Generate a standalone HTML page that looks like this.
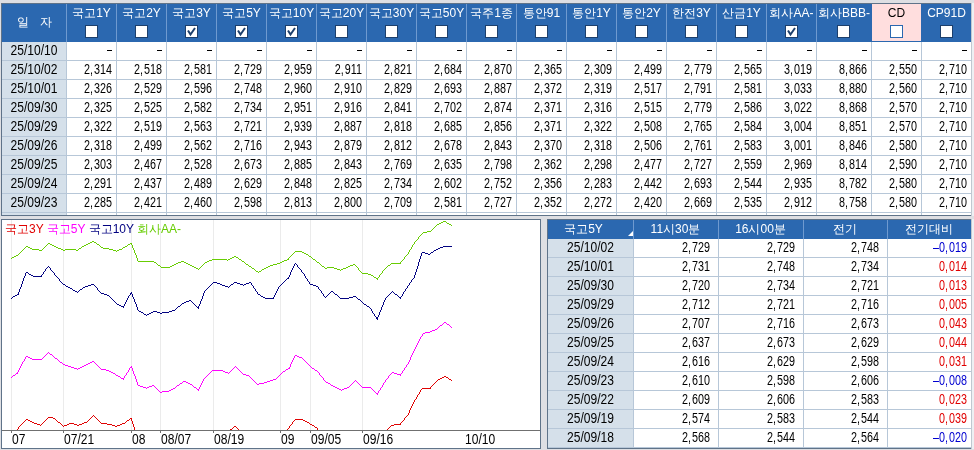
<!DOCTYPE html><html><head><meta charset="utf-8"><style>
*{margin:0;padding:0;box-sizing:border-box}
html,body{width:974px;height:450px;overflow:hidden;background:#dedfe3;font-family:"Liberation Sans",sans-serif;font-size:12px;color:#000}
.a{position:absolute}
.t{position:absolute;white-space:nowrap;line-height:12px}
.num{font-size:14px;line-height:13px;text-align:right;transform:scaleX(0.77);transform-origin:100% 0}
.dt{font-size:14px;line-height:13px;text-align:center;transform:scaleX(0.86);transform-origin:50% 0}
.r{text-align:right}
.c{text-align:center}
.hd{color:#fff}
.cm{margin-right:1.3px}
.lb{font-size:14px;line-height:13px;transform:scaleX(0.86);transform-origin:0 0}
.cb{position:absolute;width:13px;height:13px;background:#fff;border:1px solid #1d3f6b}
</style></head><body>
<div class="a" style="left:1px;top:3px;width:971px;height:213px;background:#fff;border:1px solid #5f7389;border-right:none"></div>
<div class="a" style="left:2px;top:4px;width:969px;height:38px;background:#2b68b0"></div>
<div class="a" style="left:872px;top:4px;width:49px;height:37px;background:#ffdede"></div>
<div class="a" style="left:2px;top:42px;width:64px;height:173px;background:#d5e0ea"></div>
<div class="a" style="left:66px;top:4px;width:1px;height:38px;background:#6f9ad0"></div>
<div class="a" style="left:116px;top:4px;width:1px;height:38px;background:#6f9ad0"></div>
<div class="a" style="left:166px;top:4px;width:1px;height:38px;background:#6f9ad0"></div>
<div class="a" style="left:216px;top:4px;width:1px;height:38px;background:#6f9ad0"></div>
<div class="a" style="left:266px;top:4px;width:1px;height:38px;background:#6f9ad0"></div>
<div class="a" style="left:316px;top:4px;width:1px;height:38px;background:#6f9ad0"></div>
<div class="a" style="left:366px;top:4px;width:1px;height:38px;background:#6f9ad0"></div>
<div class="a" style="left:416px;top:4px;width:1px;height:38px;background:#6f9ad0"></div>
<div class="a" style="left:466px;top:4px;width:1px;height:38px;background:#6f9ad0"></div>
<div class="a" style="left:516px;top:4px;width:1px;height:38px;background:#6f9ad0"></div>
<div class="a" style="left:566px;top:4px;width:1px;height:38px;background:#6f9ad0"></div>
<div class="a" style="left:616px;top:4px;width:1px;height:38px;background:#6f9ad0"></div>
<div class="a" style="left:666px;top:4px;width:1px;height:38px;background:#6f9ad0"></div>
<div class="a" style="left:716px;top:4px;width:1px;height:38px;background:#6f9ad0"></div>
<div class="a" style="left:766px;top:4px;width:1px;height:38px;background:#6f9ad0"></div>
<div class="a" style="left:816px;top:4px;width:1px;height:38px;background:#6f9ad0"></div>
<div class="a" style="left:66px;top:42px;width:1px;height:173px;background:#b7c7d8"></div>
<div class="a" style="left:116px;top:42px;width:1px;height:173px;background:#b7c7d8"></div>
<div class="a" style="left:166px;top:42px;width:1px;height:173px;background:#b7c7d8"></div>
<div class="a" style="left:216px;top:42px;width:1px;height:173px;background:#b7c7d8"></div>
<div class="a" style="left:266px;top:42px;width:1px;height:173px;background:#b7c7d8"></div>
<div class="a" style="left:316px;top:42px;width:1px;height:173px;background:#b7c7d8"></div>
<div class="a" style="left:366px;top:42px;width:1px;height:173px;background:#b7c7d8"></div>
<div class="a" style="left:416px;top:42px;width:1px;height:173px;background:#b7c7d8"></div>
<div class="a" style="left:466px;top:42px;width:1px;height:173px;background:#b7c7d8"></div>
<div class="a" style="left:516px;top:42px;width:1px;height:173px;background:#b7c7d8"></div>
<div class="a" style="left:566px;top:42px;width:1px;height:173px;background:#b7c7d8"></div>
<div class="a" style="left:616px;top:42px;width:1px;height:173px;background:#b7c7d8"></div>
<div class="a" style="left:666px;top:42px;width:1px;height:173px;background:#b7c7d8"></div>
<div class="a" style="left:716px;top:42px;width:1px;height:173px;background:#b7c7d8"></div>
<div class="a" style="left:766px;top:42px;width:1px;height:173px;background:#b7c7d8"></div>
<div class="a" style="left:816px;top:42px;width:1px;height:173px;background:#b7c7d8"></div>
<div class="a" style="left:871px;top:42px;width:1px;height:173px;background:#b7c7d8"></div>
<div class="a" style="left:921px;top:42px;width:1px;height:173px;background:#b7c7d8"></div>
<div class="a" style="left:971px;top:42px;width:1px;height:173px;background:#b7c7d8"></div>
<div class="a" style="left:2px;top:60px;width:969px;height:1px;background:#b7c7d8"></div>
<div class="a" style="left:2px;top:79px;width:969px;height:1px;background:#b7c7d8"></div>
<div class="a" style="left:2px;top:98px;width:969px;height:1px;background:#b7c7d8"></div>
<div class="a" style="left:2px;top:117px;width:969px;height:1px;background:#b7c7d8"></div>
<div class="a" style="left:2px;top:136px;width:969px;height:1px;background:#b7c7d8"></div>
<div class="a" style="left:2px;top:155px;width:969px;height:1px;background:#b7c7d8"></div>
<div class="a" style="left:2px;top:174px;width:969px;height:1px;background:#b7c7d8"></div>
<div class="a" style="left:2px;top:193px;width:969px;height:1px;background:#b7c7d8"></div>
<div class="a" style="left:2px;top:212px;width:969px;height:1px;background:#b7c7d8"></div>
<div class="cb" style="left:85px;top:25px;border-color:#1d3f6b"></div>
<div class="cb" style="left:135px;top:25px;border-color:#1d3f6b"></div>
<div class="cb" style="left:185px;top:25px;border-color:#1d3f6b"></div>
<svg class="a" style="left:185px;top:25px" width="13" height="13"><path d="M3 5.5 L5.5 9.5 L10 3" stroke="#1d3f6b" stroke-width="2" fill="none"/></svg>
<div class="cb" style="left:235px;top:25px;border-color:#1d3f6b"></div>
<svg class="a" style="left:235px;top:25px" width="13" height="13"><path d="M3 5.5 L5.5 9.5 L10 3" stroke="#1d3f6b" stroke-width="2" fill="none"/></svg>
<div class="cb" style="left:285px;top:25px;border-color:#1d3f6b"></div>
<svg class="a" style="left:285px;top:25px" width="13" height="13"><path d="M3 5.5 L5.5 9.5 L10 3" stroke="#1d3f6b" stroke-width="2" fill="none"/></svg>
<div class="cb" style="left:335px;top:25px;border-color:#1d3f6b"></div>
<div class="cb" style="left:385px;top:25px;border-color:#1d3f6b"></div>
<div class="cb" style="left:435px;top:25px;border-color:#1d3f6b"></div>
<div class="cb" style="left:485px;top:25px;border-color:#1d3f6b"></div>
<div class="cb" style="left:535px;top:25px;border-color:#1d3f6b"></div>
<div class="cb" style="left:585px;top:25px;border-color:#1d3f6b"></div>
<div class="cb" style="left:635px;top:25px;border-color:#1d3f6b"></div>
<div class="cb" style="left:685px;top:25px;border-color:#1d3f6b"></div>
<div class="cb" style="left:735px;top:25px;border-color:#1d3f6b"></div>
<div class="cb" style="left:785px;top:25px;border-color:#1d3f6b"></div>
<svg class="a" style="left:785px;top:25px" width="13" height="13"><path d="M3 5.5 L5.5 9.5 L10 3" stroke="#1d3f6b" stroke-width="2" fill="none"/></svg>
<div class="cb" style="left:837px;top:25px;border-color:#1d3f6b"></div>
<div class="cb" style="left:890px;top:25px;border-color:#2b68b0"></div>
<div class="cb" style="left:940px;top:25px;border-color:#1d3f6b"></div>
<div class="a" style="left:107px;top:50px;width:5px;height:1px;background:#000"></div>
<div class="a" style="left:157px;top:50px;width:5px;height:1px;background:#000"></div>
<div class="a" style="left:207px;top:50px;width:5px;height:1px;background:#000"></div>
<div class="a" style="left:257px;top:50px;width:5px;height:1px;background:#000"></div>
<div class="a" style="left:307px;top:50px;width:5px;height:1px;background:#000"></div>
<div class="a" style="left:357px;top:50px;width:5px;height:1px;background:#000"></div>
<div class="a" style="left:407px;top:50px;width:5px;height:1px;background:#000"></div>
<div class="a" style="left:457px;top:50px;width:5px;height:1px;background:#000"></div>
<div class="a" style="left:507px;top:50px;width:5px;height:1px;background:#000"></div>
<div class="a" style="left:557px;top:50px;width:5px;height:1px;background:#000"></div>
<div class="a" style="left:607px;top:50px;width:5px;height:1px;background:#000"></div>
<div class="a" style="left:657px;top:50px;width:5px;height:1px;background:#000"></div>
<div class="a" style="left:707px;top:50px;width:5px;height:1px;background:#000"></div>
<div class="a" style="left:757px;top:50px;width:5px;height:1px;background:#000"></div>
<div class="a" style="left:807px;top:50px;width:5px;height:1px;background:#000"></div>
<div class="a" style="left:862px;top:50px;width:5px;height:1px;background:#000"></div>
<div class="a" style="left:912px;top:50px;width:5px;height:1px;background:#000"></div>
<div class="a" style="left:962px;top:50px;width:5px;height:1px;background:#000"></div>
<div class="a" style="left:971px;top:3px;width:3px;height:213px;background:#eef0f3;border-left:1px solid #c0c8d0"></div>
<div class="a" style="left:1px;top:219px;width:540px;height:230px;background:#fff;border:1px solid #5f7389"></div>
<svg class="a" style="left:0;top:0" width="974" height="450"><defs><clipPath id="cp"><rect x="2" y="220" width="538" height="210"/></clipPath></defs><line x1="11.5" y1="220" x2="11.5" y2="430" stroke="#ebebeb" stroke-width="1"/><line x1="63.5" y1="220" x2="63.5" y2="430" stroke="#ebebeb" stroke-width="1"/><line x1="131.5" y1="220" x2="131.5" y2="430" stroke="#ebebeb" stroke-width="1"/><line x1="160.5" y1="220" x2="160.5" y2="430" stroke="#ebebeb" stroke-width="1"/><line x1="213.5" y1="220" x2="213.5" y2="430" stroke="#ebebeb" stroke-width="1"/><line x1="280.5" y1="220" x2="280.5" y2="430" stroke="#ebebeb" stroke-width="1"/><line x1="310.5" y1="220" x2="310.5" y2="430" stroke="#ebebeb" stroke-width="1"/><line x1="362.5" y1="220" x2="362.5" y2="430" stroke="#ebebeb" stroke-width="1"/><g clip-path="url(#cp)" fill="none" stroke-width="0.99" shape-rendering="crispEdges"><polyline points="11.25,258.25 17.25,255.25 26.25,246.25 32.25,249.25 41.25,250.25 48.25,243.25 63.25,250.25 71.25,249.25 77.25,250.25 85.25,245.25 93.25,241.25 103.25,248.25 110.25,249.25 116.25,251.25 121.25,249.25 131.25,243.25 138.25,261.25 153.25,261.25 161.25,267.25 169.25,267.25 182.25,261.25 198.25,269.25 206.25,262.25 213.25,259.25 224.25,259.25 227.25,260.25 235.25,256.25 248.25,265.25 258.25,272.25 269.25,266.25 279.25,263.25 288.25,259.25 295.25,251.25 299.25,251.25 303.25,252.25 311.25,257.25 325.25,268.25 332.25,267.25 340.25,270.25 347.25,267.25 354.25,264.25 362.25,273.25 370.25,274.25 377.25,279.25 385.25,268.25 392.25,263.25 400.25,263.25 408.25,253.25 414.25,243.25 422.25,233.25 430.25,231.25 438.25,224.25 444.25,221.25 451.25,225.25" stroke="#66cc00"/><path d="M11 258h1v1h-1zM17 255h1v1h-1zM26 246h1v1h-1zM32 249h1v1h-1zM41 250h1v1h-1zM48 243h1v1h-1zM63 250h1v1h-1zM71 249h1v1h-1zM77 250h1v1h-1zM85 245h1v1h-1zM93 241h1v1h-1zM103 248h1v1h-1zM110 249h1v1h-1zM116 251h1v1h-1zM121 249h1v1h-1zM131 243h1v1h-1zM138 261h1v1h-1zM153 261h1v1h-1zM161 267h1v1h-1zM169 267h1v1h-1zM182 261h1v1h-1zM198 269h1v1h-1zM206 262h1v1h-1zM213 259h1v1h-1zM224 259h1v1h-1zM227 260h1v1h-1zM235 256h1v1h-1zM248 265h1v1h-1zM258 272h1v1h-1zM269 266h1v1h-1zM279 263h1v1h-1zM288 259h1v1h-1zM295 251h1v1h-1zM299 251h1v1h-1zM303 252h1v1h-1zM311 257h1v1h-1zM325 268h1v1h-1zM332 267h1v1h-1zM340 270h1v1h-1zM347 267h1v1h-1zM354 264h1v1h-1zM362 273h1v1h-1zM370 274h1v1h-1zM377 279h1v1h-1zM385 268h1v1h-1zM392 263h1v1h-1zM400 263h1v1h-1zM408 253h1v1h-1zM414 243h1v1h-1zM422 233h1v1h-1zM430 231h1v1h-1zM438 224h1v1h-1zM444 221h1v1h-1zM451 225h1v1h-1z" fill="#66cc00" stroke="none"/><polyline points="11.25,298.25 18.25,294.25 26.25,272.25 33.25,276.25 41.25,276.25 48.25,266.25 56.25,276.25 63.25,284.25 70.25,288.25 77.25,292.25 84.25,287.25 93.25,284.25 101.25,293.25 108.25,295.25 117.25,304.25 123.25,307.25 131.25,292.25 138.25,310.25 146.25,315.25 154.25,311.25 160.25,313.25 168.25,312.25 174.25,310.25 183.25,303.25 190.25,300.25 198.25,308.25 205.25,290.25 214.25,282.25 220.25,284.25 228.25,287.25 235.25,282.25 243.25,285.25 250.25,282.25 258.25,294.25 265.25,298.25 273.25,298.25 279.25,286.25 288.25,278.25 295.25,263.25 303.25,273.25 310.25,284.25 317.25,286.25 325.25,297.25 332.25,291.25 340.25,298.25 348.25,298.25 355.25,296.25 363.25,303.25 370.25,308.25 377.25,319.25 385.25,299.25 392.25,291.25 400.25,298.25 407.25,287.25 414.25,277.25 422.25,252.25 429.25,254.25 435.25,250.25 444.25,246.25 451.25,246.25" stroke="#000080"/><path d="M11 298h1v1h-1zM18 294h1v1h-1zM26 272h1v1h-1zM33 276h1v1h-1zM41 276h1v1h-1zM48 266h1v1h-1zM56 276h1v1h-1zM63 284h1v1h-1zM70 288h1v1h-1zM77 292h1v1h-1zM84 287h1v1h-1zM93 284h1v1h-1zM101 293h1v1h-1zM108 295h1v1h-1zM117 304h1v1h-1zM123 307h1v1h-1zM131 292h1v1h-1zM138 310h1v1h-1zM146 315h1v1h-1zM154 311h1v1h-1zM160 313h1v1h-1zM168 312h1v1h-1zM174 310h1v1h-1zM183 303h1v1h-1zM190 300h1v1h-1zM198 308h1v1h-1zM205 290h1v1h-1zM214 282h1v1h-1zM220 284h1v1h-1zM228 287h1v1h-1zM235 282h1v1h-1zM243 285h1v1h-1zM250 282h1v1h-1zM258 294h1v1h-1zM265 298h1v1h-1zM273 298h1v1h-1zM279 286h1v1h-1zM288 278h1v1h-1zM295 263h1v1h-1zM303 273h1v1h-1zM310 284h1v1h-1zM317 286h1v1h-1zM325 297h1v1h-1zM332 291h1v1h-1zM340 298h1v1h-1zM348 298h1v1h-1zM355 296h1v1h-1zM363 303h1v1h-1zM370 308h1v1h-1zM377 319h1v1h-1zM385 299h1v1h-1zM392 291h1v1h-1zM400 298h1v1h-1zM407 287h1v1h-1zM414 277h1v1h-1zM422 252h1v1h-1zM429 254h1v1h-1zM435 250h1v1h-1zM444 246h1v1h-1zM451 246h1v1h-1z" fill="#000080" stroke="none"/><polyline points="11.25,377.25 17.25,373.25 26.25,356.25 32.25,359.25 41.25,359.25 48.25,352.25 59.25,361.25 63.25,364.25 71.25,367.25 77.25,369.25 85.25,365.25 93.25,361.25 101.25,369.25 107.25,370.25 115.25,374.25 123.25,379.25 131.25,366.25 138.25,385.25 146.25,388.25 153.25,385.25 160.25,392.25 168.25,391.25 174.25,388.25 184.25,381.25 192.25,385.25 198.25,390.25 204.25,378.25 213.25,370.25 221.25,370.25 228.25,373.25 235.25,366.25 243.25,374.25 249.25,376.25 257.25,384.25 263.25,383.25 269.25,381.25 275.25,379.25 284.25,371.25 289.25,368.25 295.25,355.25 302.25,358.25 311.25,367.25 317.25,371.25 325.25,381.25 333.25,386.25 341.25,390.25 348.25,387.25 355.25,380.25 362.25,387.25 370.25,387.25 377.25,394.25 385.25,381.25 392.25,372.25 400.25,375.25 408.25,363.25 415.25,348.25 423.25,333.25 429.25,332.25 436.25,329.25 445.25,322.25 451.25,327.25" stroke="#ff00ff"/><path d="M11 377h1v1h-1zM17 373h1v1h-1zM26 356h1v1h-1zM32 359h1v1h-1zM41 359h1v1h-1zM48 352h1v1h-1zM59 361h1v1h-1zM63 364h1v1h-1zM71 367h1v1h-1zM77 369h1v1h-1zM85 365h1v1h-1zM93 361h1v1h-1zM101 369h1v1h-1zM107 370h1v1h-1zM115 374h1v1h-1zM123 379h1v1h-1zM131 366h1v1h-1zM138 385h1v1h-1zM146 388h1v1h-1zM153 385h1v1h-1zM160 392h1v1h-1zM168 391h1v1h-1zM174 388h1v1h-1zM184 381h1v1h-1zM192 385h1v1h-1zM198 390h1v1h-1zM204 378h1v1h-1zM213 370h1v1h-1zM221 370h1v1h-1zM228 373h1v1h-1zM235 366h1v1h-1zM243 374h1v1h-1zM249 376h1v1h-1zM257 384h1v1h-1zM263 383h1v1h-1zM269 381h1v1h-1zM275 379h1v1h-1zM284 371h1v1h-1zM289 368h1v1h-1zM295 355h1v1h-1zM302 358h1v1h-1zM311 367h1v1h-1zM317 371h1v1h-1zM325 381h1v1h-1zM333 386h1v1h-1zM341 390h1v1h-1zM348 387h1v1h-1zM355 380h1v1h-1zM362 387h1v1h-1zM370 387h1v1h-1zM377 394h1v1h-1zM385 381h1v1h-1zM392 372h1v1h-1zM400 375h1v1h-1zM408 363h1v1h-1zM415 348h1v1h-1zM423 333h1v1h-1zM429 332h1v1h-1zM436 329h1v1h-1zM445 322h1v1h-1zM451 327h1v1h-1z" fill="#ff00ff" stroke="none"/><polyline points="11.25,437.25 18.25,428.25 26.25,419.25 34.25,423.25 40.25,425.25 48.25,417.25 54.25,418.25 63.25,426.25 71.25,423.25 78.25,425.25 86.25,422.25 93.25,415.25 101.25,423.25 109.25,424.25 116.25,426.25 124.25,423.25 131.25,418.25 138.25,439.25 146.25,445.25 220.25,445.25 227.25,432.25 235.25,426.25 242.25,433.25 250.25,445.25 272.25,445.25 279.25,440.25 287.25,430.25 295.25,419.25 301.25,419.25 307.25,422.25 317.25,428.25 324.25,440.25 332.25,445.25 377.25,445.25 384.25,432.25 392.25,425.25 400.25,424.25 408.25,414.25 413.25,403.25 422.25,388.25 430.25,388.25 437.25,380.25 445.25,376.25 451.25,380.25" stroke="#e00000"/><path d="M11 437h1v1h-1zM18 428h1v1h-1zM26 419h1v1h-1zM34 423h1v1h-1zM40 425h1v1h-1zM48 417h1v1h-1zM54 418h1v1h-1zM63 426h1v1h-1zM71 423h1v1h-1zM78 425h1v1h-1zM86 422h1v1h-1zM93 415h1v1h-1zM101 423h1v1h-1zM109 424h1v1h-1zM116 426h1v1h-1zM124 423h1v1h-1zM131 418h1v1h-1zM138 439h1v1h-1zM146 445h1v1h-1zM220 445h1v1h-1zM227 432h1v1h-1zM235 426h1v1h-1zM242 433h1v1h-1zM250 445h1v1h-1zM272 445h1v1h-1zM279 440h1v1h-1zM287 430h1v1h-1zM295 419h1v1h-1zM301 419h1v1h-1zM307 422h1v1h-1zM317 428h1v1h-1zM324 440h1v1h-1zM332 445h1v1h-1zM377 445h1v1h-1zM384 432h1v1h-1zM392 425h1v1h-1zM400 424h1v1h-1zM408 414h1v1h-1zM413 403h1v1h-1zM422 388h1v1h-1zM430 388h1v1h-1zM437 380h1v1h-1zM445 376h1v1h-1zM451 380h1v1h-1z" fill="#e00000" stroke="none"/></g><line x1="2" y1="430.5" x2="540" y2="430.5" stroke="#707070" stroke-width="1"/><line x1="11.5" y1="430" x2="11.5" y2="433" stroke="#707070" stroke-width="1"/><line x1="63.5" y1="430" x2="63.5" y2="433" stroke="#707070" stroke-width="1"/><line x1="131.5" y1="430" x2="131.5" y2="433" stroke="#707070" stroke-width="1"/><line x1="160.5" y1="430" x2="160.5" y2="433" stroke="#707070" stroke-width="1"/><line x1="213.5" y1="430" x2="213.5" y2="433" stroke="#707070" stroke-width="1"/><line x1="280.5" y1="430" x2="280.5" y2="433" stroke="#707070" stroke-width="1"/><line x1="310.5" y1="430" x2="310.5" y2="433" stroke="#707070" stroke-width="1"/><line x1="362.5" y1="430" x2="362.5" y2="433" stroke="#707070" stroke-width="1"/></svg>
<div class="a" style="left:547px;top:219px;width:425px;height:230px;background:#fff;border:1px solid #5f7389;border-right:none"></div>
<div class="a" style="left:548px;top:220px;width:423px;height:19px;background:#2b68b0"></div>
<div class="a" style="left:548px;top:239px;width:85px;height:209px;background:#d5e0ea"></div>
<div class="a" style="left:633px;top:220px;width:1px;height:19px;background:#6f9ad0"></div>
<div class="a" style="left:718px;top:220px;width:1px;height:19px;background:#6f9ad0"></div>
<div class="a" style="left:803px;top:220px;width:1px;height:19px;background:#6f9ad0"></div>
<div class="a" style="left:887px;top:220px;width:1px;height:19px;background:#6f9ad0"></div>
<div class="a" style="left:633px;top:239px;width:1px;height:209px;background:#b7c7d8"></div>
<div class="a" style="left:718px;top:239px;width:1px;height:209px;background:#b7c7d8"></div>
<div class="a" style="left:803px;top:239px;width:1px;height:209px;background:#b7c7d8"></div>
<div class="a" style="left:887px;top:239px;width:1px;height:209px;background:#b7c7d8"></div>
<div class="a" style="left:971px;top:239px;width:1px;height:209px;background:#b7c7d8"></div>
<div class="a" style="left:548px;top:257px;width:423px;height:1px;background:#b7c7d8"></div>
<div class="a" style="left:548px;top:276px;width:423px;height:1px;background:#b7c7d8"></div>
<div class="a" style="left:548px;top:295px;width:423px;height:1px;background:#b7c7d8"></div>
<div class="a" style="left:548px;top:314px;width:423px;height:1px;background:#b7c7d8"></div>
<div class="a" style="left:548px;top:333px;width:423px;height:1px;background:#b7c7d8"></div>
<div class="a" style="left:548px;top:352px;width:423px;height:1px;background:#b7c7d8"></div>
<div class="a" style="left:548px;top:371px;width:423px;height:1px;background:#b7c7d8"></div>
<div class="a" style="left:548px;top:390px;width:423px;height:1px;background:#b7c7d8"></div>
<div class="a" style="left:548px;top:409px;width:423px;height:1px;background:#b7c7d8"></div>
<div class="a" style="left:548px;top:428px;width:423px;height:1px;background:#b7c7d8"></div>
<div class="a" style="left:548px;top:447px;width:423px;height:1px;background:#b7c7d8"></div>
<svg class="a" style="left:628px;top:231px" width="5" height="5"><path d="M5 0 L5 5 L0 5 Z" fill="#fff"/></svg>
<div class="a" style="left:971px;top:219px;width:3px;height:230px;background:#eef0f3;border-left:1px solid #c0c8d0"></div>
<div class="a" style="left:0;top:0;width:974px;height:450px;will-change:transform"><div class="t hd c" style="left:2px;top:16px;width:64px">일<span style="margin-left:11px">자</span></div><div class="t c" style="left:67px;top:7px;width:49px;color:#fff">국고1Y</div><div class="t c" style="left:117px;top:7px;width:49px;color:#fff">국고2Y</div><div class="t c" style="left:167px;top:7px;width:49px;color:#fff">국고3Y</div><div class="t c" style="left:217px;top:7px;width:49px;color:#fff">국고5Y</div><div class="t c" style="left:267px;top:7px;width:49px;color:#fff">국고10Y</div><div class="t c" style="left:317px;top:7px;width:49px;color:#fff">국고20Y</div><div class="t c" style="left:367px;top:7px;width:49px;color:#fff">국고30Y</div><div class="t c" style="left:417px;top:7px;width:49px;color:#fff">국고50Y</div><div class="t c" style="left:467px;top:7px;width:49px;color:#fff">국주1종</div><div class="t c" style="left:517px;top:7px;width:49px;color:#fff">통안91</div><div class="t c" style="left:567px;top:7px;width:49px;color:#fff">통안1Y</div><div class="t c" style="left:617px;top:7px;width:49px;color:#fff">통안2Y</div><div class="t c" style="left:667px;top:7px;width:49px;color:#fff">한전3Y</div><div class="t c" style="left:717px;top:7px;width:49px;color:#fff">산금1Y</div><div class="t c" style="left:767px;top:7px;width:49px;color:#fff">회사AA-</div><div class="t c" style="left:817px;top:7px;width:54px;color:#fff">회사BBB-</div><div class="t c" style="left:872px;top:7px;width:49px;color:#000">CD</div><div class="t c" style="left:922px;top:7px;width:49px;color:#fff">CP91D</div><div class="t dt" style="left:2px;top:44px;width:64px">25/10/10</div><div class="t dt" style="left:2px;top:63px;width:64px">25/10/02</div><div class="t num" style="left:52px;top:63px;width:60px">2<span class="cm">,</span>314</div><div class="t num" style="left:102px;top:63px;width:60px">2<span class="cm">,</span>518</div><div class="t num" style="left:152px;top:63px;width:60px">2<span class="cm">,</span>581</div><div class="t num" style="left:202px;top:63px;width:60px">2<span class="cm">,</span>729</div><div class="t num" style="left:252px;top:63px;width:60px">2<span class="cm">,</span>959</div><div class="t num" style="left:302px;top:63px;width:60px">2<span class="cm">,</span>911</div><div class="t num" style="left:352px;top:63px;width:60px">2<span class="cm">,</span>821</div><div class="t num" style="left:402px;top:63px;width:60px">2<span class="cm">,</span>684</div><div class="t num" style="left:452px;top:63px;width:60px">2<span class="cm">,</span>870</div><div class="t num" style="left:502px;top:63px;width:60px">2<span class="cm">,</span>365</div><div class="t num" style="left:552px;top:63px;width:60px">2<span class="cm">,</span>309</div><div class="t num" style="left:602px;top:63px;width:60px">2<span class="cm">,</span>499</div><div class="t num" style="left:652px;top:63px;width:60px">2<span class="cm">,</span>779</div><div class="t num" style="left:702px;top:63px;width:60px">2<span class="cm">,</span>565</div><div class="t num" style="left:752px;top:63px;width:60px">3<span class="cm">,</span>019</div><div class="t num" style="left:807px;top:63px;width:60px">8<span class="cm">,</span>866</div><div class="t num" style="left:857px;top:63px;width:60px">2<span class="cm">,</span>550</div><div class="t num" style="left:907px;top:63px;width:60px">2<span class="cm">,</span>710</div><div class="t dt" style="left:2px;top:82px;width:64px">25/10/01</div><div class="t num" style="left:52px;top:82px;width:60px">2<span class="cm">,</span>326</div><div class="t num" style="left:102px;top:82px;width:60px">2<span class="cm">,</span>529</div><div class="t num" style="left:152px;top:82px;width:60px">2<span class="cm">,</span>596</div><div class="t num" style="left:202px;top:82px;width:60px">2<span class="cm">,</span>748</div><div class="t num" style="left:252px;top:82px;width:60px">2<span class="cm">,</span>960</div><div class="t num" style="left:302px;top:82px;width:60px">2<span class="cm">,</span>910</div><div class="t num" style="left:352px;top:82px;width:60px">2<span class="cm">,</span>829</div><div class="t num" style="left:402px;top:82px;width:60px">2<span class="cm">,</span>693</div><div class="t num" style="left:452px;top:82px;width:60px">2<span class="cm">,</span>887</div><div class="t num" style="left:502px;top:82px;width:60px">2<span class="cm">,</span>372</div><div class="t num" style="left:552px;top:82px;width:60px">2<span class="cm">,</span>319</div><div class="t num" style="left:602px;top:82px;width:60px">2<span class="cm">,</span>517</div><div class="t num" style="left:652px;top:82px;width:60px">2<span class="cm">,</span>791</div><div class="t num" style="left:702px;top:82px;width:60px">2<span class="cm">,</span>581</div><div class="t num" style="left:752px;top:82px;width:60px">3<span class="cm">,</span>033</div><div class="t num" style="left:807px;top:82px;width:60px">8<span class="cm">,</span>880</div><div class="t num" style="left:857px;top:82px;width:60px">2<span class="cm">,</span>560</div><div class="t num" style="left:907px;top:82px;width:60px">2<span class="cm">,</span>710</div><div class="t dt" style="left:2px;top:101px;width:64px">25/09/30</div><div class="t num" style="left:52px;top:101px;width:60px">2<span class="cm">,</span>325</div><div class="t num" style="left:102px;top:101px;width:60px">2<span class="cm">,</span>525</div><div class="t num" style="left:152px;top:101px;width:60px">2<span class="cm">,</span>582</div><div class="t num" style="left:202px;top:101px;width:60px">2<span class="cm">,</span>734</div><div class="t num" style="left:252px;top:101px;width:60px">2<span class="cm">,</span>951</div><div class="t num" style="left:302px;top:101px;width:60px">2<span class="cm">,</span>916</div><div class="t num" style="left:352px;top:101px;width:60px">2<span class="cm">,</span>841</div><div class="t num" style="left:402px;top:101px;width:60px">2<span class="cm">,</span>702</div><div class="t num" style="left:452px;top:101px;width:60px">2<span class="cm">,</span>874</div><div class="t num" style="left:502px;top:101px;width:60px">2<span class="cm">,</span>371</div><div class="t num" style="left:552px;top:101px;width:60px">2<span class="cm">,</span>316</div><div class="t num" style="left:602px;top:101px;width:60px">2<span class="cm">,</span>515</div><div class="t num" style="left:652px;top:101px;width:60px">2<span class="cm">,</span>779</div><div class="t num" style="left:702px;top:101px;width:60px">2<span class="cm">,</span>586</div><div class="t num" style="left:752px;top:101px;width:60px">3<span class="cm">,</span>022</div><div class="t num" style="left:807px;top:101px;width:60px">8<span class="cm">,</span>868</div><div class="t num" style="left:857px;top:101px;width:60px">2<span class="cm">,</span>570</div><div class="t num" style="left:907px;top:101px;width:60px">2<span class="cm">,</span>710</div><div class="t dt" style="left:2px;top:120px;width:64px">25/09/29</div><div class="t num" style="left:52px;top:120px;width:60px">2<span class="cm">,</span>322</div><div class="t num" style="left:102px;top:120px;width:60px">2<span class="cm">,</span>519</div><div class="t num" style="left:152px;top:120px;width:60px">2<span class="cm">,</span>563</div><div class="t num" style="left:202px;top:120px;width:60px">2<span class="cm">,</span>721</div><div class="t num" style="left:252px;top:120px;width:60px">2<span class="cm">,</span>939</div><div class="t num" style="left:302px;top:120px;width:60px">2<span class="cm">,</span>887</div><div class="t num" style="left:352px;top:120px;width:60px">2<span class="cm">,</span>818</div><div class="t num" style="left:402px;top:120px;width:60px">2<span class="cm">,</span>685</div><div class="t num" style="left:452px;top:120px;width:60px">2<span class="cm">,</span>856</div><div class="t num" style="left:502px;top:120px;width:60px">2<span class="cm">,</span>371</div><div class="t num" style="left:552px;top:120px;width:60px">2<span class="cm">,</span>322</div><div class="t num" style="left:602px;top:120px;width:60px">2<span class="cm">,</span>508</div><div class="t num" style="left:652px;top:120px;width:60px">2<span class="cm">,</span>765</div><div class="t num" style="left:702px;top:120px;width:60px">2<span class="cm">,</span>584</div><div class="t num" style="left:752px;top:120px;width:60px">3<span class="cm">,</span>004</div><div class="t num" style="left:807px;top:120px;width:60px">8<span class="cm">,</span>851</div><div class="t num" style="left:857px;top:120px;width:60px">2<span class="cm">,</span>570</div><div class="t num" style="left:907px;top:120px;width:60px">2<span class="cm">,</span>710</div><div class="t dt" style="left:2px;top:139px;width:64px">25/09/26</div><div class="t num" style="left:52px;top:139px;width:60px">2<span class="cm">,</span>318</div><div class="t num" style="left:102px;top:139px;width:60px">2<span class="cm">,</span>499</div><div class="t num" style="left:152px;top:139px;width:60px">2<span class="cm">,</span>562</div><div class="t num" style="left:202px;top:139px;width:60px">2<span class="cm">,</span>716</div><div class="t num" style="left:252px;top:139px;width:60px">2<span class="cm">,</span>943</div><div class="t num" style="left:302px;top:139px;width:60px">2<span class="cm">,</span>879</div><div class="t num" style="left:352px;top:139px;width:60px">2<span class="cm">,</span>812</div><div class="t num" style="left:402px;top:139px;width:60px">2<span class="cm">,</span>678</div><div class="t num" style="left:452px;top:139px;width:60px">2<span class="cm">,</span>843</div><div class="t num" style="left:502px;top:139px;width:60px">2<span class="cm">,</span>370</div><div class="t num" style="left:552px;top:139px;width:60px">2<span class="cm">,</span>318</div><div class="t num" style="left:602px;top:139px;width:60px">2<span class="cm">,</span>506</div><div class="t num" style="left:652px;top:139px;width:60px">2<span class="cm">,</span>761</div><div class="t num" style="left:702px;top:139px;width:60px">2<span class="cm">,</span>583</div><div class="t num" style="left:752px;top:139px;width:60px">3<span class="cm">,</span>001</div><div class="t num" style="left:807px;top:139px;width:60px">8<span class="cm">,</span>846</div><div class="t num" style="left:857px;top:139px;width:60px">2<span class="cm">,</span>580</div><div class="t num" style="left:907px;top:139px;width:60px">2<span class="cm">,</span>710</div><div class="t dt" style="left:2px;top:158px;width:64px">25/09/25</div><div class="t num" style="left:52px;top:158px;width:60px">2<span class="cm">,</span>303</div><div class="t num" style="left:102px;top:158px;width:60px">2<span class="cm">,</span>467</div><div class="t num" style="left:152px;top:158px;width:60px">2<span class="cm">,</span>528</div><div class="t num" style="left:202px;top:158px;width:60px">2<span class="cm">,</span>673</div><div class="t num" style="left:252px;top:158px;width:60px">2<span class="cm">,</span>885</div><div class="t num" style="left:302px;top:158px;width:60px">2<span class="cm">,</span>843</div><div class="t num" style="left:352px;top:158px;width:60px">2<span class="cm">,</span>769</div><div class="t num" style="left:402px;top:158px;width:60px">2<span class="cm">,</span>635</div><div class="t num" style="left:452px;top:158px;width:60px">2<span class="cm">,</span>798</div><div class="t num" style="left:502px;top:158px;width:60px">2<span class="cm">,</span>362</div><div class="t num" style="left:552px;top:158px;width:60px">2<span class="cm">,</span>298</div><div class="t num" style="left:602px;top:158px;width:60px">2<span class="cm">,</span>477</div><div class="t num" style="left:652px;top:158px;width:60px">2<span class="cm">,</span>727</div><div class="t num" style="left:702px;top:158px;width:60px">2<span class="cm">,</span>559</div><div class="t num" style="left:752px;top:158px;width:60px">2<span class="cm">,</span>969</div><div class="t num" style="left:807px;top:158px;width:60px">8<span class="cm">,</span>814</div><div class="t num" style="left:857px;top:158px;width:60px">2<span class="cm">,</span>590</div><div class="t num" style="left:907px;top:158px;width:60px">2<span class="cm">,</span>710</div><div class="t dt" style="left:2px;top:177px;width:64px">25/09/24</div><div class="t num" style="left:52px;top:177px;width:60px">2<span class="cm">,</span>291</div><div class="t num" style="left:102px;top:177px;width:60px">2<span class="cm">,</span>437</div><div class="t num" style="left:152px;top:177px;width:60px">2<span class="cm">,</span>489</div><div class="t num" style="left:202px;top:177px;width:60px">2<span class="cm">,</span>629</div><div class="t num" style="left:252px;top:177px;width:60px">2<span class="cm">,</span>848</div><div class="t num" style="left:302px;top:177px;width:60px">2<span class="cm">,</span>825</div><div class="t num" style="left:352px;top:177px;width:60px">2<span class="cm">,</span>734</div><div class="t num" style="left:402px;top:177px;width:60px">2<span class="cm">,</span>602</div><div class="t num" style="left:452px;top:177px;width:60px">2<span class="cm">,</span>752</div><div class="t num" style="left:502px;top:177px;width:60px">2<span class="cm">,</span>356</div><div class="t num" style="left:552px;top:177px;width:60px">2<span class="cm">,</span>283</div><div class="t num" style="left:602px;top:177px;width:60px">2<span class="cm">,</span>442</div><div class="t num" style="left:652px;top:177px;width:60px">2<span class="cm">,</span>693</div><div class="t num" style="left:702px;top:177px;width:60px">2<span class="cm">,</span>544</div><div class="t num" style="left:752px;top:177px;width:60px">2<span class="cm">,</span>935</div><div class="t num" style="left:807px;top:177px;width:60px">8<span class="cm">,</span>782</div><div class="t num" style="left:857px;top:177px;width:60px">2<span class="cm">,</span>580</div><div class="t num" style="left:907px;top:177px;width:60px">2<span class="cm">,</span>710</div><div class="t dt" style="left:2px;top:196px;width:64px">25/09/23</div><div class="t num" style="left:52px;top:196px;width:60px">2<span class="cm">,</span>285</div><div class="t num" style="left:102px;top:196px;width:60px">2<span class="cm">,</span>421</div><div class="t num" style="left:152px;top:196px;width:60px">2<span class="cm">,</span>460</div><div class="t num" style="left:202px;top:196px;width:60px">2<span class="cm">,</span>598</div><div class="t num" style="left:252px;top:196px;width:60px">2<span class="cm">,</span>813</div><div class="t num" style="left:302px;top:196px;width:60px">2<span class="cm">,</span>800</div><div class="t num" style="left:352px;top:196px;width:60px">2<span class="cm">,</span>709</div><div class="t num" style="left:402px;top:196px;width:60px">2<span class="cm">,</span>581</div><div class="t num" style="left:452px;top:196px;width:60px">2<span class="cm">,</span>727</div><div class="t num" style="left:502px;top:196px;width:60px">2<span class="cm">,</span>352</div><div class="t num" style="left:552px;top:196px;width:60px">2<span class="cm">,</span>272</div><div class="t num" style="left:602px;top:196px;width:60px">2<span class="cm">,</span>420</div><div class="t num" style="left:652px;top:196px;width:60px">2<span class="cm">,</span>669</div><div class="t num" style="left:702px;top:196px;width:60px">2<span class="cm">,</span>535</div><div class="t num" style="left:752px;top:196px;width:60px">2<span class="cm">,</span>912</div><div class="t num" style="left:807px;top:196px;width:60px">8<span class="cm">,</span>758</div><div class="t num" style="left:857px;top:196px;width:60px">2<span class="cm">,</span>580</div><div class="t num" style="left:907px;top:196px;width:60px">2<span class="cm">,</span>710</div><div class="t lb" style="left:12px;top:433px">07</div><div class="t lb" style="left:64px;top:433px">07/21</div><div class="t lb" style="left:132px;top:433px">08</div><div class="t lb" style="left:161px;top:433px">08/07</div><div class="t lb" style="left:214px;top:433px">08/19</div><div class="t lb" style="left:281px;top:433px">09</div><div class="t lb" style="left:311px;top:433px">09/05</div><div class="t lb" style="left:363px;top:433px">09/16</div><div class="t lb" style="left:465px;top:433px">10/10</div><div class="t" style="left:5px;top:223px"><span style="color:#e00000">국고3Y</span> <span style="color:#ff00ff">국고5Y</span> <span style="color:#000080">국고10Y</span> <span style="color:#66cc00">회사AA-</span></div><div class="t hd c" style="left:541px;top:223px;width:85px">국고5Y</div><div class="t hd c" style="left:633px;top:223px;width:85px">11시30분</div><div class="t hd c" style="left:718px;top:223px;width:85px">16시00분</div><div class="t hd c" style="left:803px;top:223px;width:84px">전기</div><div class="t hd c" style="left:887px;top:223px;width:84px">전기대비</div><div class="t dt" style="left:548px;top:241px;width:85px">25/10/02</div><div class="t num" style="left:640px;top:241px;width:70px;color:#000">2<span class="cm">,</span>729</div><div class="t num" style="left:725px;top:241px;width:70px;color:#000">2<span class="cm">,</span>729</div><div class="t num" style="left:809px;top:241px;width:70px;color:#000">2<span class="cm">,</span>748</div><div class="t num" style="left:897px;top:241px;width:70px;color:#0000d0">&#8211;0<span class="cm">,</span>019</div><div class="t dt" style="left:548px;top:260px;width:85px">25/10/01</div><div class="t num" style="left:640px;top:260px;width:70px;color:#000">2<span class="cm">,</span>731</div><div class="t num" style="left:725px;top:260px;width:70px;color:#000">2<span class="cm">,</span>748</div><div class="t num" style="left:809px;top:260px;width:70px;color:#000">2<span class="cm">,</span>734</div><div class="t num" style="left:897px;top:260px;width:70px;color:#e00000">0<span class="cm">,</span>014</div><div class="t dt" style="left:548px;top:279px;width:85px">25/09/30</div><div class="t num" style="left:640px;top:279px;width:70px;color:#000">2<span class="cm">,</span>720</div><div class="t num" style="left:725px;top:279px;width:70px;color:#000">2<span class="cm">,</span>734</div><div class="t num" style="left:809px;top:279px;width:70px;color:#000">2<span class="cm">,</span>721</div><div class="t num" style="left:897px;top:279px;width:70px;color:#e00000">0<span class="cm">,</span>013</div><div class="t dt" style="left:548px;top:298px;width:85px">25/09/29</div><div class="t num" style="left:640px;top:298px;width:70px;color:#000">2<span class="cm">,</span>712</div><div class="t num" style="left:725px;top:298px;width:70px;color:#000">2<span class="cm">,</span>721</div><div class="t num" style="left:809px;top:298px;width:70px;color:#000">2<span class="cm">,</span>716</div><div class="t num" style="left:897px;top:298px;width:70px;color:#e00000">0<span class="cm">,</span>005</div><div class="t dt" style="left:548px;top:317px;width:85px">25/09/26</div><div class="t num" style="left:640px;top:317px;width:70px;color:#000">2<span class="cm">,</span>707</div><div class="t num" style="left:725px;top:317px;width:70px;color:#000">2<span class="cm">,</span>716</div><div class="t num" style="left:809px;top:317px;width:70px;color:#000">2<span class="cm">,</span>673</div><div class="t num" style="left:897px;top:317px;width:70px;color:#e00000">0<span class="cm">,</span>043</div><div class="t dt" style="left:548px;top:336px;width:85px">25/09/25</div><div class="t num" style="left:640px;top:336px;width:70px;color:#000">2<span class="cm">,</span>637</div><div class="t num" style="left:725px;top:336px;width:70px;color:#000">2<span class="cm">,</span>673</div><div class="t num" style="left:809px;top:336px;width:70px;color:#000">2<span class="cm">,</span>629</div><div class="t num" style="left:897px;top:336px;width:70px;color:#e00000">0<span class="cm">,</span>044</div><div class="t dt" style="left:548px;top:355px;width:85px">25/09/24</div><div class="t num" style="left:640px;top:355px;width:70px;color:#000">2<span class="cm">,</span>616</div><div class="t num" style="left:725px;top:355px;width:70px;color:#000">2<span class="cm">,</span>629</div><div class="t num" style="left:809px;top:355px;width:70px;color:#000">2<span class="cm">,</span>598</div><div class="t num" style="left:897px;top:355px;width:70px;color:#e00000">0<span class="cm">,</span>031</div><div class="t dt" style="left:548px;top:374px;width:85px">25/09/23</div><div class="t num" style="left:640px;top:374px;width:70px;color:#000">2<span class="cm">,</span>610</div><div class="t num" style="left:725px;top:374px;width:70px;color:#000">2<span class="cm">,</span>598</div><div class="t num" style="left:809px;top:374px;width:70px;color:#000">2<span class="cm">,</span>606</div><div class="t num" style="left:897px;top:374px;width:70px;color:#0000d0">&#8211;0<span class="cm">,</span>008</div><div class="t dt" style="left:548px;top:393px;width:85px">25/09/22</div><div class="t num" style="left:640px;top:393px;width:70px;color:#000">2<span class="cm">,</span>609</div><div class="t num" style="left:725px;top:393px;width:70px;color:#000">2<span class="cm">,</span>606</div><div class="t num" style="left:809px;top:393px;width:70px;color:#000">2<span class="cm">,</span>583</div><div class="t num" style="left:897px;top:393px;width:70px;color:#e00000">0<span class="cm">,</span>023</div><div class="t dt" style="left:548px;top:412px;width:85px">25/09/19</div><div class="t num" style="left:640px;top:412px;width:70px;color:#000">2<span class="cm">,</span>574</div><div class="t num" style="left:725px;top:412px;width:70px;color:#000">2<span class="cm">,</span>583</div><div class="t num" style="left:809px;top:412px;width:70px;color:#000">2<span class="cm">,</span>544</div><div class="t num" style="left:897px;top:412px;width:70px;color:#e00000">0<span class="cm">,</span>039</div><div class="t dt" style="left:548px;top:431px;width:85px">25/09/18</div><div class="t num" style="left:640px;top:431px;width:70px;color:#000">2<span class="cm">,</span>568</div><div class="t num" style="left:725px;top:431px;width:70px;color:#000">2<span class="cm">,</span>544</div><div class="t num" style="left:809px;top:431px;width:70px;color:#000">2<span class="cm">,</span>564</div><div class="t num" style="left:897px;top:431px;width:70px;color:#0000d0">&#8211;0<span class="cm">,</span>020</div></div>
</body></html>
